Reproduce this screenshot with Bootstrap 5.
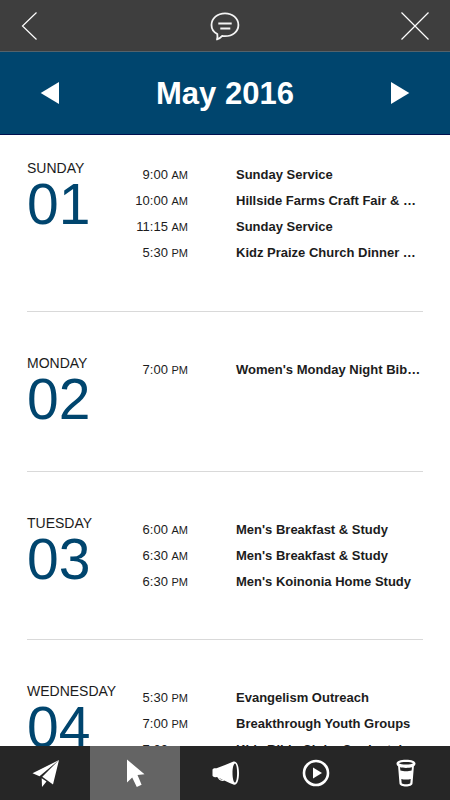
<!DOCTYPE html>
<html lang="en">
<head>
<meta charset="utf-8">
<meta name="viewport" content="width=device-width, initial-scale=1">
<title>May 2016</title>
<link href="https://cdn.jsdelivr.net/npm/bootstrap@5.3.0/dist/css/bootstrap.min.css" rel="stylesheet">
<style>
body { font-family: "Liberation Sans", Arial, sans-serif; color: #1c1c1c; }
button { color: #fff; }
.top-bar { background: #3e3e3e; border-bottom: 1px solid #54626b; height: 52px; padding: 0 20px; }
.month-bar { background: #00456e; border-bottom: 1px solid #00104e; height: 83px; padding: 0 40px; }
.month-title { font-size: 31px; line-height: 40px; padding-top: 2px; }
.agenda { padding: 0 27px; }
.day { min-height: 160px; padding: 43px 0 44px; border-bottom: 1px solid #d9d9d9; }
.day:first-child { padding: 25px 0 45px; }
.date-col { width: 100px; }
.day-name { font-size: 14px; line-height: 16px; font-weight: 400; }
.day-number { font-size: 57px; line-height: 56px; color: #00456e; }
.event { font-size: 13px; line-height: 26px; }
.event time { width: 61px; }
.event small { font-size: 11px; }
.event a { margin-left: 48px; color: #1c1c1c; }
.events { padding-top: 2px; }
.tab-bar { background: #262626; height: 54px; }
.tab-bar .active { background: #646464; }
</style>
</head>
<body>
<div class="d-flex flex-column vh-100 overflow-hidden bg-white">
  <header class="top-bar flex-shrink-0 d-flex align-items-center justify-content-between">
    <button type="button" class="btn border-0 p-0 d-flex" aria-label="Back">
      <svg width="30" height="30" viewBox="0 0 30 30" fill="none" stroke="#fff" stroke-width="1.2"><path d="M16.500 1.500 2.500 15 16.500 28.500"/></svg>
    </button>
    <button type="button" class="btn border-0 p-0 d-flex" aria-label="Messages">
      <svg width="30" height="30" viewBox="0 0 30 30" fill="none" stroke="#f4f4f4" stroke-width="1.800" stroke-linejoin="round"><path d="M7.300 23C3.500 21 1.500 17.500 1.500 14 1.500 7.300 7.500 2.300 15 2.300S28.400 7.300 28.400 14 22.500 25.200 15 25.200c-1.200 0-2 0-2.800-.3-1.500 1.700-3.200 2.900-5.200 3.600.500-1.800.6-3.700.3-5.500Z"/><path d="M8.300 12.500h13.400M10.300 17.500h10"/></svg>
    </button>
    <button type="button" class="btn border-0 p-0 d-flex" aria-label="Close">
      <svg width="30" height="30" viewBox="0 0 30 30" fill="none" stroke="#fff" stroke-width="1.2"><path d="M1.500 1.500l27 27M28.500 1.500l-27 27"/></svg>
    </button>
  </header>
  <div class="month-bar flex-shrink-0 d-flex align-items-center justify-content-between">
    <button type="button" class="btn border-0 p-0 d-flex" aria-label="Previous month">
      <svg width="20" height="22" viewBox="0 0 20 22" fill="#fff"><path d="M.700 11 19 0v22Z"/></svg>
    </button>
    <h1 class="month-title fw-bold text-white m-0">May 2016</h1>
    <button type="button" class="btn border-0 p-0 d-flex" aria-label="Next month">
      <svg width="20" height="22" viewBox="0 0 20 22" fill="#fff"><path d="M19.300 11 1 0v22Z"/></svg>
    </button>
  </div>
  <main class="agenda flex-fill overflow-hidden">
    <section class="day d-flex">
      <div class="date-col flex-shrink-0"><h2 class="day-name m-0">SUNDAY</h2><div class="day-number">01</div></div>
      <ul class="events list-unstyled m-0 flex-fill">
        <li class="event d-flex"><time class="text-end flex-shrink-0">9:00 <small>AM</small></time><a href="#" class="fw-bold text-decoration-none text-nowrap">Sunday Service</a></li>
        <li class="event d-flex"><time class="text-end flex-shrink-0">10:00 <small>AM</small></time><a href="#" class="fw-bold text-decoration-none text-nowrap">Hillside Farms Craft Fair &amp; …</a></li>
        <li class="event d-flex"><time class="text-end flex-shrink-0">11:15 <small>AM</small></time><a href="#" class="fw-bold text-decoration-none text-nowrap">Sunday Service</a></li>
        <li class="event d-flex"><time class="text-end flex-shrink-0">5:30 <small>PM</small></time><a href="#" class="fw-bold text-decoration-none text-nowrap">Kidz Praize Church Dinner …</a></li>
      </ul>
    </section>
    <section class="day d-flex">
      <div class="date-col flex-shrink-0"><h2 class="day-name m-0">MONDAY</h2><div class="day-number">02</div></div>
      <ul class="events list-unstyled m-0 flex-fill">
        <li class="event d-flex"><time class="text-end flex-shrink-0">7:00 <small>PM</small></time><a href="#" class="fw-bold text-decoration-none text-nowrap">Women's Monday Night Bib…</a></li>
      </ul>
    </section>
    <section class="day d-flex">
      <div class="date-col flex-shrink-0"><h2 class="day-name m-0">TUESDAY</h2><div class="day-number">03</div></div>
      <ul class="events list-unstyled m-0 flex-fill">
        <li class="event d-flex"><time class="text-end flex-shrink-0">6:00 <small>AM</small></time><a href="#" class="fw-bold text-decoration-none text-nowrap">Men's Breakfast &amp; Study</a></li>
        <li class="event d-flex"><time class="text-end flex-shrink-0">6:30 <small>AM</small></time><a href="#" class="fw-bold text-decoration-none text-nowrap">Men's Breakfast &amp; Study</a></li>
        <li class="event d-flex"><time class="text-end flex-shrink-0">6:30 <small>PM</small></time><a href="#" class="fw-bold text-decoration-none text-nowrap">Men's Koinonia Home Study</a></li>
      </ul>
    </section>
    <section class="day d-flex">
      <div class="date-col flex-shrink-0"><h2 class="day-name m-0">WEDNESDAY</h2><div class="day-number">04</div></div>
      <ul class="events list-unstyled m-0 flex-fill">
        <li class="event d-flex"><time class="text-end flex-shrink-0">5:30 <small>PM</small></time><a href="#" class="fw-bold text-decoration-none text-nowrap">Evangelism Outreach</a></li>
        <li class="event d-flex"><time class="text-end flex-shrink-0">7:00 <small>PM</small></time><a href="#" class="fw-bold text-decoration-none text-nowrap">Breakthrough Youth Groups</a></li>
        <li class="event d-flex"><time class="text-end flex-shrink-0">7:00 <small>PM</small></time><a href="#" class="fw-bold text-decoration-none text-nowrap">Kidz Bible Clubs Cardental</a></li>
      </ul>
    </section>
  </main>
  <nav class="tab-bar flex-shrink-0 d-flex" aria-label="Main">
    <button type="button" class="btn border-0 rounded-0 p-0 w-100 d-flex align-items-center justify-content-center" aria-label="Send">
      <svg width="30" height="30" viewBox="0 0 30 30" fill="#fff"><path d="M29 2 2.500 15.300 9.500 18.200ZM29 2 12.300 18.700 23 26.500ZM11.700 20.300 12 29 16.500 23.500Z"/></svg>
    </button>
    <button type="button" class="btn border-0 rounded-0 p-0 w-100 d-flex align-items-center justify-content-center active" aria-label="Events">
      <svg width="30" height="30" viewBox="0 0 30 30" fill="#fff"><path d="M7 1.500v23l5.200-5 4.600 9.500 4.800-2.200L17.500 17l7-.7Z"/></svg>
    </button>
    <button type="button" class="btn border-0 rounded-0 p-0 w-100 d-flex align-items-center justify-content-center" aria-label="News">
      <svg width="30" height="30" viewBox="0 0 30 30"><path d="M8.500 19c.5 3 2.500 3.500 5 3.200l1.500-1.500" fill="none" stroke="#fff" stroke-width="1.300"/><path fill="#fff" fill-rule="evenodd" d="M2.500 11.500c1-1.700 2.500-1.300 4-1.200C12 8 18 6 23.500 3.500 27 2.500 29 8.500 29 15s-1.700 12.500-5 11.800C18 24.300 13 21.500 6.500 19c-1.500.3-3 .5-4-1.200ZM25 5.500c-1.600.5-2.500 4.500-2.500 9.500s1 9 2.500 9.800c1.400-1 2.100-4.800 2.100-9.800s-.7-9-2.100-9.500Z"/></svg>
    </button>
    <button type="button" class="btn border-0 rounded-0 p-0 w-100 d-flex align-items-center justify-content-center" aria-label="Watch">
      <svg width="30" height="30" viewBox="0 0 30 30"><circle cx="16" cy="15" r="12" fill="none" stroke="#fff" stroke-width="2.600"/><path fill="#fff" d="M13 9.500v11l9-5.500Z"/></svg>
    </button>
    <button type="button" class="btn border-0 rounded-0 p-0 w-100 d-flex align-items-center justify-content-center" aria-label="Cafe">
      <svg width="30" height="30" viewBox="-2 -1 30 30"><path fill="#fff" fill-rule="evenodd" d="M4.500 4.500C4.500 2 8.500.7 14 .7s9.500 1.300 9.500 3.800c0 1.200-.6 2-1.600 2.700L20.500 24.500c-.2 2-3 3-6.500 3s-6.300-1-6.500-3L6.100 7.200C5.100 6.500 4.500 5.700 4.500 4.500ZM7 4.300C8.500 6 19.500 6 21 4.300 19.500 2.500 8.500 2.500 7 4.300ZM8 8.300l.4 3.200c3 1 8.200 1 11.200 0L20 8.300c-3 .8-9 .8-12 0ZM9.300 20l.4 4.300c1.800 1.300 6.800 1.300 8.600 0l.4-4.300c-2.500.7-6.900.7-9.400 0Z"/></svg>
    </button>
  </nav>
</div>
<script src="https://cdn.jsdelivr.net/npm/bootstrap@5.3.0/dist/js/bootstrap.bundle.min.js"></script>
</body>
</html>
